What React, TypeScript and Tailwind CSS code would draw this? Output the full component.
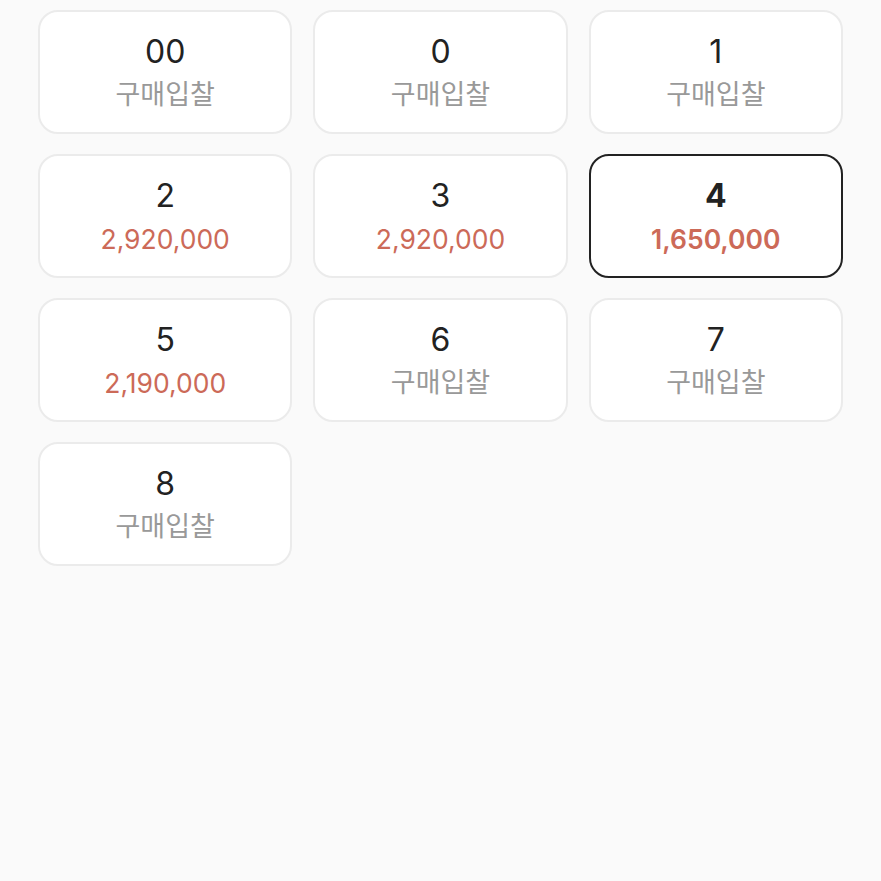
import React from "react";

type Item = { n: string; price?: string; selected?: boolean };

const items: Item[] = [
  { n: "00" },
  { n: "0" },
  { n: "1" },
  { n: "2", price: "2,920,000" },
  { n: "3", price: "2,920,000" },
  { n: "4", price: "1,650,000", selected: true },
  { n: "5", price: "2,190,000" },
  { n: "6" },
  { n: "7" },
  { n: "8" },
];

export default function App() {
  return (
    <div
      className="w-[881px] h-[881px] bg-[#fafafa] overflow-hidden"
      style={{ fontFamily: 'Inter, "Noto Sans CJK KR", sans-serif' }}
    >
      <div className="grid grid-cols-3 gap-x-[21px] gap-y-[20px] pl-[38px] pr-[38px] pt-[10px]">
        {items.map((it) => (
          <div
            key={it.n}
            className={
              it.selected
                ? "h-[124px] rounded-[20px] border-2 border-[#222222] bg-white flex flex-col items-center justify-center"
                : "h-[124px] rounded-[20px] border-2 border-[#ebebeb] bg-white flex flex-col items-center justify-center"
            }
          >
            <div
              className={
                it.selected
                  ? "text-[32px] leading-[40px] font-bold text-[#222222]"
                  : "text-[32px] leading-[40px] text-[#222222]"
              }
            >
              {it.n}
            </div>
            {it.price ? (
              <div
                className={
                  it.selected
                    ? "text-[26.5px] leading-[36px] font-semibold text-[#cc6a58] mt-[5px]"
                    : "text-[26.5px] leading-[36px] text-[#cc6a58] mt-[5px]"
                }
              >
                {it.price}
              </div>
            ) : (
              <div className="text-[27px] leading-[36px] text-[#999999] mt-[5px]">
                구매입찰
              </div>
            )}
          </div>
        ))}
      </div>
    </div>
  );
}
